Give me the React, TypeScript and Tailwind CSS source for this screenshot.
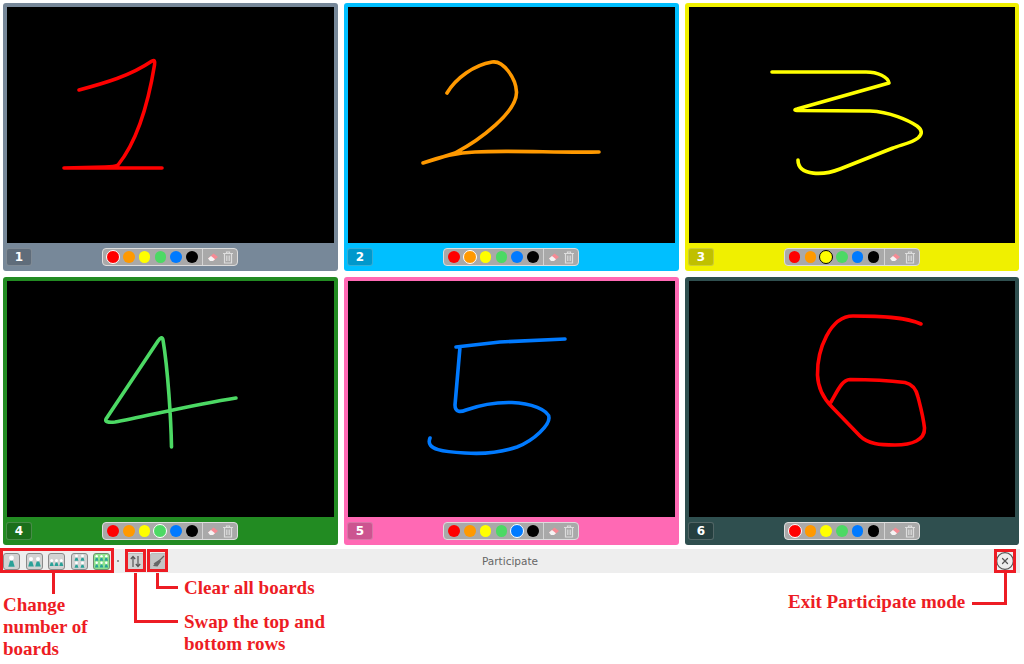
import React from "react";
import { CircleX } from "lucide-react";

const colors = ["#ff0000", "#ff9900", "#ffff00", "#4cd964", "#007aff", "#000000"];

const boards = [
  {
    id: 1,
    bg: "bg-[#778899]",
    selected: 0,
    ring: "border-white",
    stroke: "#ff0000",
    box: "7 7 327 236",
    d: "M79 90 C105 83 130 76 152 61 Q155.5 59 154.5 65 C148 105 138 140 118 165 Q115 167 105 167 L64 168 L162 168",
  },
  {
    id: 2,
    bg: "bg-[#00bfff]",
    selected: 1,
    ring: "border-white",
    stroke: "#ff9900",
    box: "348 7 327 236",
    d: "M447 93 C456 78 474 65 492 62 C503 60 516 78 516.5 92 C517 112 480 140 455 153 Q440 158 423 163 Q450 153 475 152 C510 150 560 153 599 152",
  },
  {
    id: 3,
    bg: "bg-[#f0f000]",
    selected: 2,
    ring: "border-black",
    stroke: "#ffff00",
    box: "689 7 326 236",
    d: "M772 72 L866 72 C878 72 888 77 889 83 L797 109 Q793 110 797 110.5 L870 111 C890 112 908 120 917 126 Q925 132 918 138 C912 143 900 145 893 148 L840 169 C825 175 798 177 798 160",
  },
  {
    id: 4,
    bg: "bg-[#228b22]",
    selected: 3,
    ring: "border-white",
    stroke: "#4cd964",
    box: "7 281 327 236",
    d: "M171.5 447 C171 420 168 370 163 340 Q162 335 158 341 L106 419 Q104 423 115 422 C140 418 190 405 236 398",
  },
  {
    id: 5,
    bg: "bg-[#ff69b4]",
    selected: 4,
    ring: "border-white",
    stroke: "#007aff",
    box: "348 281 327 236",
    d: "M565 339 L500 342 L456 347 M460 347 L455 405 C455 413 461 412 466 410 C480 405 495 402 512 402.5 C530 403 549 410 549 418 C549 425 535 440 517 447 C500 453 480 454 465 453 C445 452 425 450 430 438",
  },
  {
    id: 6,
    bg: "bg-[#2f4f4f]",
    selected: 0,
    ring: "border-white",
    stroke: "#ff0000",
    box: "689 281 326 236",
    d: "M921 324 C905 317 880 316 853 316 C830 316 817 350 817.5 375 C818 388 824 399 832 407 L860 436 C868 444 880 445 895 445 C912 445 925 440 924.5 428 C923 415 920 405 918 397 C916 388 912 384 905 382.5 C885 380 870 379.5 850 379.5 C842 380 838 390 831 402",
  },
];

// head radius, body height and the x, y of each person's head in a 17x17 button
const layouts = [
  { r: 2.4, h: 6, w: 3.2, people: [[8.5, 5]] },
  { r: 2, h: 5, w: 2.8, people: [[5, 6], [12, 6]] },
  { r: 1.5, h: 3.5, w: 2, people: [[3.7, 7.5], [8.5, 7.5], [13.3, 7.5]] },
  { r: 1.4, h: 3, w: 2, people: [[5.5, 3], [11.5, 3], [5.5, 10], [11.5, 10]] },
  { r: 1.2, h: 3, w: 1.8, people: [[3.7, 3.2], [8.5, 3.2], [13.3, 3.2], [3.7, 9.8], [8.5, 9.8], [13.3, 9.8]] },
];

function Eraser() {
  return (
    <svg width="12" height="12" viewBox="0 0 12 12">
      <path d="M1 7.5 L6.5 2.5 L11 6 L6 10 Z" fill="#f58a94" />
      <path d="M1 7.5 L4 5 L8 8.2 L6 10 L3 10 Z" fill="#f4f4f4" />
    </svg>
  );
}

function Trash() {
  return (
    <svg width="10" height="13" viewBox="0 0 10 13" fill="none" stroke="#dddddd" strokeWidth="1.2">
      <path d="M0 2.5 H10 M3.5 2.5 V1 H6.5 V2.5" />
      <path d="M1.5 2.5 H8.5 V12 H1.5 Z" />
      <path d="M3.8 4.5 V10 M6.2 4.5 V10" />
    </svg>
  );
}

function Board({ board }: { board: (typeof boards)[number] }) {
  return (
    <div className={`flex flex-col h-[268px] rounded-[3px] px-1 pt-1 ${board.bg}`}>
      <svg viewBox={board.box} className="block w-full h-[236px] bg-black shrink-0">
        <path d={board.d} fill="none" stroke={board.stroke} strokeWidth="3.6" strokeLinecap="round" strokeLinejoin="round" />
      </svg>
      <div className="grid grid-cols-[1fr_auto_1fr] items-center h-[28px]">
        <div className="-ml-px w-[26px] h-[18px] flex items-center justify-center rounded-[3px] bg-black/20 border border-white/20 text-white text-[12px] font-bold font-['DejaVu_Sans',sans-serif]">
          {board.id}
        </div>
        <div className="-ml-[0.5px] flex items-center h-[18px] w-[136px] rounded-[4px] bg-[#a9a9a9] border border-[#dddddd] pl-[2px]">
          <div className="flex items-center w-[98px] h-full border-r border-[#d4d4d4]">
            {colors.map((c, i) => (
              <div key={c} className="w-[15.75px] h-full flex items-center justify-center shrink-0">
                {i === board.selected ? (
                  <div className={`w-[14px] h-[14px] rounded-full border ${board.ring} shrink-0`} style={{ background: c }} />
                ) : (
                  <div className="w-[11.5px] h-[11.5px] rounded-full shrink-0" style={{ background: c }} />
                )}
              </div>
            ))}
          </div>
          <div className="flex items-center gap-[4px] pl-[4px]">
            <Eraser />
            <Trash />
          </div>
        </div>
      </div>
    </div>
  );
}

function LayoutButton({ layout, active }: { layout: (typeof layouts)[number]; active?: boolean }) {
  return (
    <div className={`w-[17px] h-[17px] rounded-[3px] border ${active ? "bg-[#8fe38f] border-[#6f8f6f]" : "bg-[#d2d2d2] border-[#8a8a8a]"}`}>
      <svg viewBox="0 0 17 17" className="block w-[17px] h-[17px] -m-px">
        {layout.people.map(([x, y], i) => {
          const top = y + layout.r + 0.4;
          return (
            <g key={i}>
              <circle cx={x} cy={y} r={layout.r} fill="#ffffff" />
              <path
                d={`M${x - layout.w} ${top + layout.h} L${x - layout.w * 0.45} ${top} H${x + layout.w * 0.45} L${x + layout.w} ${top + layout.h} Z`}
                fill="#2aa198"
              />
            </g>
          );
        })}
      </svg>
    </div>
  );
}

function Toolbar() {
  return (
    <div className="relative flex items-center w-[1020px] h-[24px] mt-[4px] bg-[#eeeeee] pl-[3px]">
      <div className="flex items-center gap-[5.5px]">
        {layouts.map((l, i) => (
          <LayoutButton key={i} layout={l} active={i === 4} />
        ))}
      </div>
      <div className="w-[2px] h-[2px] ml-[7px] bg-[#777777] rounded-full" />
      <div className="flex items-center justify-center w-[17px] h-[17px] ml-[8px] rounded-[2px] bg-[#d2d2d2] border border-[#bbbbbb]">
        <svg width="13" height="13" viewBox="0 0 13 13" fill="none" stroke="#555555" strokeWidth="1.2">
          <path d="M4 12 V1.5 M1.8 4 L4 1.5 L6.2 4" />
          <path d="M9 1 V11.5 M6.8 9 L9 11.5 L11.2 9" />
        </svg>
      </div>
      <div className="flex items-center justify-center w-[17px] h-[17px] ml-[6px] rounded-[2px] bg-[#c4c4c4] border border-[#bbbbbb]">
        <svg width="13" height="13" viewBox="0 0 13 13">
          <path d="M12 1 L7 6" stroke="#666666" strokeWidth="1.2" />
          <path d="M7.5 4.5 L9 6.5 L5.5 11.5 L1 11 L2.5 9 L1.5 8.5 Z" fill="#666666" />
        </svg>
      </div>
      <span className="absolute inset-0 flex items-center justify-center pt-[1px] text-[10.5px] text-[#666666] font-['DejaVu_Sans',sans-serif]">
        Participate
      </span>
      <CircleX className="relative w-[20px] h-[20px] ml-auto mr-[5px] text-[#555555]" strokeWidth={1.5} />

      {/* red highlight boxes */}
      <div className="absolute left-0 top-[-1px] w-[114px] h-[25px] border-[3px] border-[#ed1c24]" />
      <div className="absolute left-[125px] top-0 w-[21px] h-[23px] border-[3px] border-[#ed1c24]" />
      <div className="absolute left-[147px] top-0 w-[21px] h-[23px] border-[3px] border-[#ed1c24]" />
      <div className="absolute left-[994px] top-0 w-[22px] h-[24px] border-[3px] border-[#ed1c24]" />
    </div>
  );
}

function Callouts() {
  return (
    <div className="relative flex-1 text-[#ed1c24] font-bold text-[19px] leading-[22px] font-['Liberation_Serif',serif]">
      <div className="flex pt-[21px] pl-[3px]">
        <div className="w-[181px]">
          Change
          <br />
          number of
          <br />
          boards
        </div>
        <div className="-mt-[17px]">
          <div>Clear all boards</div>
          <div className="mt-[12px]">
            Swap the top and
            <br />
            bottom rows
          </div>
        </div>
        <div className="ml-[463px] -mt-[3px] whitespace-nowrap">Exit Participate mode</div>
      </div>

      {/* connector lines */}
      <div className="absolute left-[52px] top-0 w-[3px] h-[21px] bg-[#ed1c24]" />
      <div className="absolute left-[134px] top-0 w-[3px] h-[50px] bg-[#ed1c24]" />
      <div className="absolute left-[134px] top-[47px] w-[44px] h-[3px] bg-[#ed1c24]" />
      <div className="absolute left-[156px] top-0 w-[3px] h-[16px] bg-[#ed1c24]" />
      <div className="absolute left-[156px] top-[13px] w-[22px] h-[3px] bg-[#ed1c24]" />
      <div className="absolute left-[1004px] top-0 w-[3px] h-[32px] bg-[#ed1c24]" />
      <div className="absolute left-[972px] top-[29px] w-[35px] h-[3px] bg-[#ed1c24]" />
    </div>
  );
}

export default function App() {
  return (
    <div className="flex flex-col w-[1024px] h-[664px] bg-white overflow-hidden">
      <div className="grid grid-cols-[335px_335px_334px] gap-[6px] pt-[3px] pl-[3px]">
        {boards.map((b) => (
          <Board key={b.id} board={b} />
        ))}
      </div>
      <Toolbar />
      <Callouts />
    </div>
  );
}
